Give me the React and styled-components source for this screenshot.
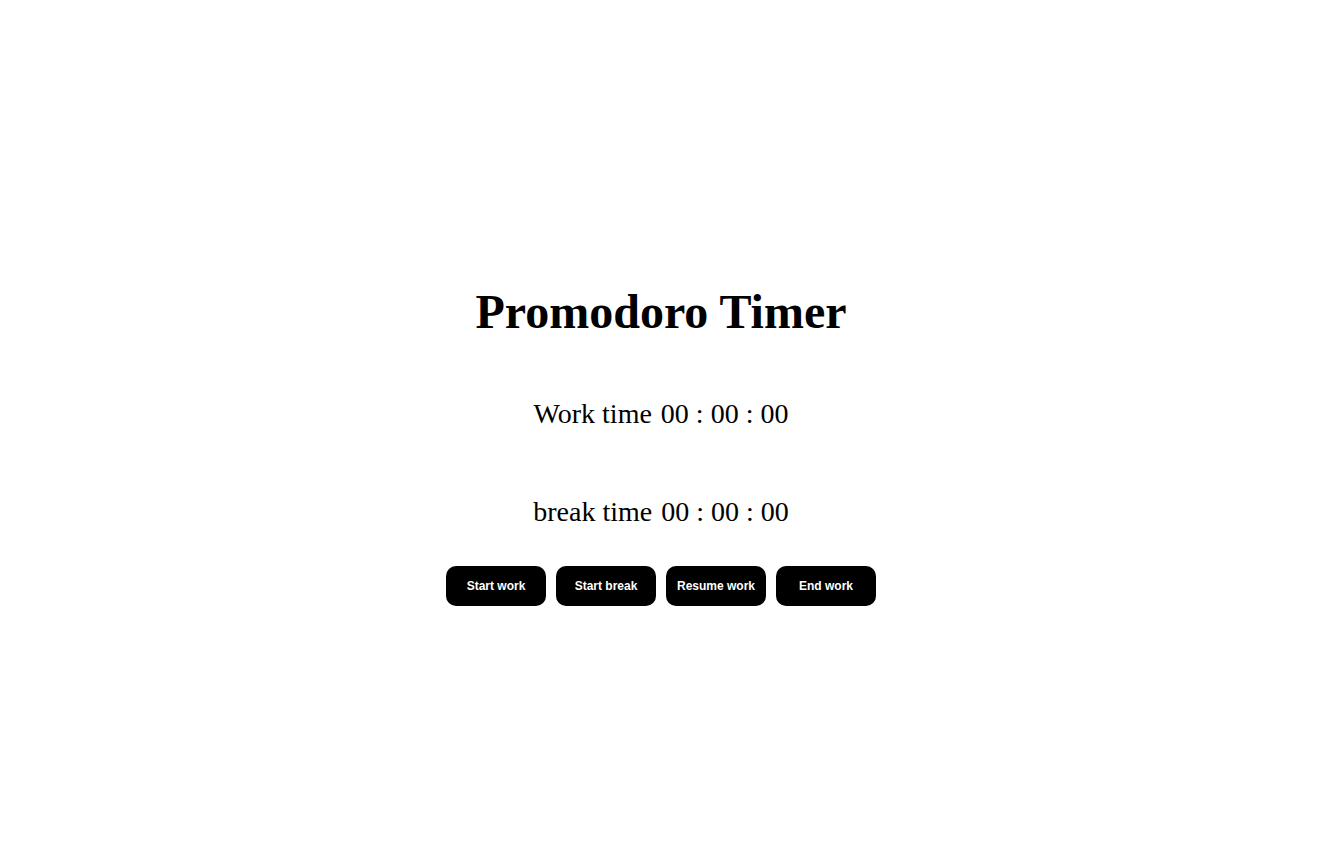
import React from "react";
import styled, { createGlobalStyle } from "styled-components";

const Global = createGlobalStyle`
  html, body { margin: 0; padding: 0; background: #fff; }
  body { font-family: "Liberation Serif", "Times New Roman", serif; color: #000; }
`;

const Page = styled.main`
  min-height: 863px;
  display: flex;
  flex-direction: column;
  align-items: center;
  justify-content: center;
  padding: 26px 11px 0 0;
  box-sizing: border-box;
`;

const Title = styled.h1`
  font-size: 48px;
  font-weight: bold;
  margin: 0 0 44px;
  line-height: 1.2;
`;

const TimerRow = styled.div`
  display: flex;
  gap: 9px;
  font-size: 28px;
  line-height: 1.2;
  margin: ${(p) => (p.$spaced ? "53px" : "12px")} 0 12px;
`;

const Label = styled.span``;
const Clock = styled.span``;

const Controls = styled.div`
  display: flex;
  gap: 10px;
  margin-top: 25px;
`;

const Button = styled.button`
  width: 100px;
  height: 40px;
  border: none;
  border-radius: 10px;
  background: #000;
  color: #fff;
  font-family: "Liberation Sans", Arial, sans-serif;
  font-size: 12px;
  font-weight: bold;
  cursor: pointer;
`;

export default function App() {
  return (
    <>
      <Global />
      <Page>
        <Title>Promodoro Timer</Title>
        <TimerRow>
          <Label>Work time</Label>
          <Clock>00 : 00 : 00</Clock>
        </TimerRow>
        <TimerRow $spaced>
          <Label>break time</Label>
          <Clock>00 : 00 : 00</Clock>
        </TimerRow>
        <Controls>
          <Button>Start work</Button>
          <Button>Start break</Button>
          <Button>Resume work</Button>
          <Button>End work</Button>
        </Controls>
      </Page>
    </>
  );
}
